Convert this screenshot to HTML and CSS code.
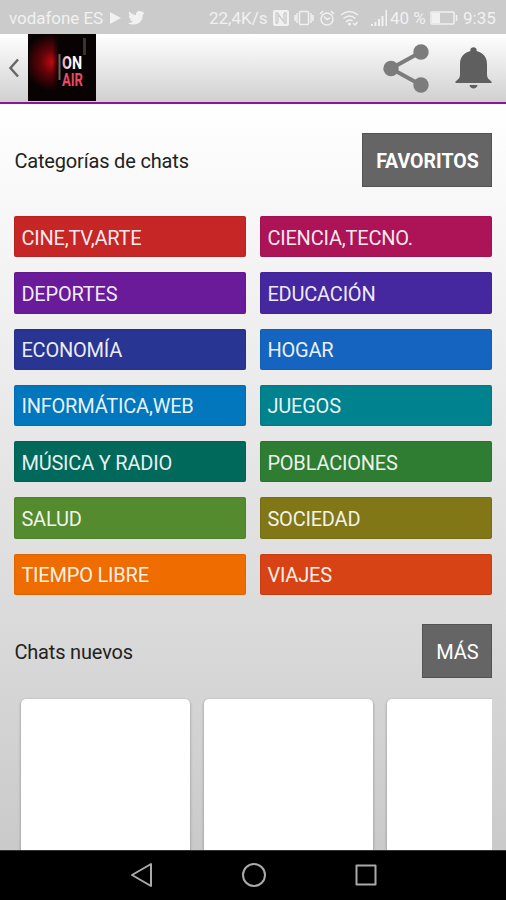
FILE: index.html
```html
<!DOCTYPE html>
<html lang="es">
<head>
<meta charset="utf-8">
<meta name="viewport" content="width=device-width, initial-scale=1">
<title>Chats</title>
<link rel="stylesheet" href="styles.css">
</head>
<body>
<div class="phone">
  <div class="status">
    <span class="carrier">vodafone ES</span>
    <svg class="play" width="11" height="12" viewBox="0 0 11 12"><path d="M0 0L11 6L0 12Z"/></svg>
    <svg class="bird" width="17" height="14" viewBox="0 0 17 14"><path d="M16.5 2L14.7 4C15 9.5 11 13.5 5.6 13.5C3.500 13.500 1.500 13 0 12C2 12.100 3.600 11.500 5 10.500C3.300 10.300 2.300 9.400 1.900 8.100H3.300C1.700 7.500 .8 6.200 .8 4.600L2.200 5C.8 3.700.500 2.200 1.300.600C3.100 2.800 5.300 4 8 4.200C7.500 1.800 9.200 0 11.400 0C12.400 0 13.200.400 13.900 1.100L16 .400L14.800 2Z"/></svg>
    <span class="speed">22,4K/s</span>
    <svg class="nfc" width="16" height="16" viewBox="0 0 16 16"><rect width="16" height="16" rx="2"/><path class="cut" d="M5 3H3V13H5M5 3V12.500M5 4L11 12V3.500M11 3H13V13H11"/></svg>
    <svg class="vibrate line" width="20" height="16" viewBox="0 0 20 16"><rect x="5.500" y="1.500" width="9" height="13" rx="1"/><path d="M3 3V7L2 8L3 9V13M1 5V11M17 3V7L18 8L17 9V13M19 5V11"/></svg>
    <svg class="alarm line" width="16" height="16" viewBox="0 0 16 16"><circle cx="8" cy="9" r="6"/><path d="M1 4L4 1M15 4L12 1M5 6.500L8 9.500L11 8"/></svg>
    <svg class="wifi line" width="19" height="16" viewBox="0 0 19 16"><path d="M1 5Q9.500 -2 18 5M3.500 8.500Q9.500 3.500 15.500 8.500M6 12Q9.500 8.500 12.500 11"/><circle class="dot" cx="9.500" cy="14" r="1.600"/><path d="M13 13L15 15L17.500 12"/></svg>
    <svg class="signal" width="17" height="16" viewBox="0 0 17 16"><path d="M0 14H2V16H0ZM3.500 12H5.500V16H3.500ZM7 9H9V16H7ZM10.500 6H12.500V16H10.500ZM14.500 0H16V16H14.500Z"/></svg>
    <span class="percent">40 %</span>
    <svg class="battery line" width="28" height="14" viewBox="0 0 28 14"><rect x="1" y="1" width="23" height="12" rx="1"/><path class="dot" d="M2 2H10V12H2Z"/><path d="M26.500 4V10"/></svg>
    <span class="time">9:35</span>
  </div>

  <header class="bar">
    <svg class="back" width="12" height="20" viewBox="0 0 12 20"><path d="M10 1.500L2.500 10L10 18.500"/></svg>
    <svg class="logo" width="68" height="67" viewBox="0 0 68 67">
      <defs>
        <radialGradient id="glow" cx="25" cy="28" r="29" gradientUnits="userSpaceOnUse"><stop offset="0" stop-color="#c80812"/><stop offset=".4" stop-color="#650408"/><stop offset="1" stop-color="#080203"/></radialGradient>
        <linearGradient id="fade" x1="0" x2="1"><stop offset="0" stop-color="#080203" stop-opacity="0"/><stop offset="1" stop-color="#080203"/></linearGradient>
        <linearGradient id="neon" x1="0" x2="1"><stop offset="0" stop-color="#f0a0ae"/><stop offset=".5" stop-color="#fff"/></linearGradient>
      </defs>
      <rect width="68" height="67" fill="#080203"/>
      <rect x="1" y="1" width="30" height="65" fill="url(#glow)"/>
      <rect x="24" y="1" width="7" height="65" fill="url(#fade)"/>
      <path d="M31.500 20V46" stroke="#75605b" stroke-width="2"/>
      <path d="M56.500 4V21" stroke="#343632" stroke-width="3"/>
      <text x="34" y="35" textLength="20" lengthAdjust="spacingAndGlyphs" fill="url(#neon)">ON</text>
      <text x="34" y="52" textLength="21" lengthAdjust="spacingAndGlyphs" fill="#ed4763">AIR</text>
    </svg>
    <svg class="share" width="46" height="49" viewBox="0 0 46 49"><path d="M38 8L8 24.500L38 41"/><circle cx="8" cy="24.500" r="7.700"/><circle cx="38" cy="8" r="7.700"/><circle cx="38" cy="41" r="7.700"/></svg>
    <svg class="bell" width="37" height="43" viewBox="0 0 37 43"><path d="M15.500 5C14 0 23 0 21.500 5C28 6.500 32 11 32 18V29C32 32 34 33.500 36.500 35.500V37H.5V35.500C3 33.500 5 32 5 29V18C5 11 9 6.500 15.500 5ZM14.500 39H22.500C22 43.500 15 43.500 14.500 39Z"/></svg>
  </header>

  <main class="content">
    <div class="heading">
      <h2>Categorías de chats</h2>
      <button class="button strong">FAVORITOS</button>
    </div>
    <div class="categories">
      <a class="red">CINE,TV,ARTE</a><a class="pink">CIENCIA,TECNO.</a>
      <a class="purple">DEPORTES</a><a class="violet">EDUCACIÓN</a>
      <a class="indigo">ECONOMÍA</a><a class="blue">HOGAR</a>
      <a class="sky">INFORMÁTICA,WEB</a><a class="cyan">JUEGOS</a>
      <a class="teal">MÚSICA Y RADIO</a><a class="green">POBLACIONES</a>
      <a class="lime">SALUD</a><a class="olive">SOCIEDAD</a>
      <a class="orange">TIEMPO LIBRE</a><a class="vermilion">VIAJES</a>
    </div>
    <div class="heading recent">
      <h2>Chats nuevos</h2>
      <button class="button more">MÁS</button>
    </div>
    <div class="cards"><div class="card"></div><div class="card"></div><div class="card"></div></div>
  </main>

  <nav class="nav">
    <svg width="24" height="26" viewBox="0 0 24 26"><path d="M21 2V24L2 13Z"/></svg>
    <svg width="26" height="26" viewBox="0 0 26 26"><circle cx="13" cy="13" r="11"/></svg>
    <svg width="24" height="26" viewBox="0 0 24 26"><rect x="2.500" y="3.500" width="19" height="19"/></svg>
  </nav>
</div>
</body>
</html>
```
FILE: styles.css
```css
* { box-sizing: border-box; }
body { margin: 0; font-family: Roboto, "Liberation Sans", sans-serif; }
svg { display: block; flex: none; }
.phone { width: 506px; height: 900px; display: flex; flex-direction: column; overflow: hidden; }

.status { height: 34px; flex: none; display: flex; align-items: center; padding: 2px 0 0 9px; background: #cbcbcb; color: #f1f1f1; font-size: 17px; line-height: 20px; white-space: nowrap; }
.status svg { fill: #f1f1f1; }
.status .line { fill: none; stroke: #f1f1f1; stroke-width: 1.5; }
.status .dot { fill: #f1f1f1; stroke: none; }
.status .cut { fill: none; stroke: #cbcbcb; stroke-width: 1.3; }
.carrier { width: 101px; letter-spacing: -.05px; }
.bird { margin-left: 7px; }
.speed { width: 64px; margin-left: 64px; }
.vibrate { margin-left: 5px; }
.alarm { margin-left: 5px; }
.wifi { margin-left: 5px; }
.signal { margin-left: 12px; }
.percent { width: 40px; margin-left: 2px; }
.time { margin-left: 5px; }

.bar { height: 70px; flex: none; display: flex; align-items: flex-start; border-bottom: 2px solid #8d1592; background: linear-gradient(#fff, #d0d0d0); }
.back { margin: 24px 0 0 8px; fill: none; stroke: #686868; stroke-width: 2.5; }
.logo { margin-left: 8px; }
.logo text { font-size: 17.5px; font-weight: 700; }
.share { margin: 10px 0 0 287px; fill: #7c7c7c; }
.share path { fill: none; stroke: #7c7c7c; stroke-width: 4; }
.bell { margin: 12px 0 0 25.5px; fill: #5f5f5f; }

.content { height: 746px; flex: none; padding: 29px 13.6px 0 14.4px; background: linear-gradient(#fff, #cacaca); overflow: hidden; }
.heading { height: 54px; display: flex; align-items: center; justify-content: space-between; }
.heading h2 { margin: 0; padding-top: 2px; font-size: 20px; line-height: 26px; font-weight: 400; color: #222; letter-spacing: -.17px; }
.button { height: 54px; width: 130px; padding: 3px 0 0; border: 1px solid #535353; background: #656565; color: #fff; font: 400 20px Roboto, sans-serif; }
.button.strong { font-weight: 700; font-size: 19.5px; }
.button.more { width: 70px; padding-top: 2px; }
.categories { margin-top: 29px; display: grid; grid-template-columns: 232px 232px; grid-auto-rows: 41.25px; gap: 15px 14px; }
.categories a { padding: 1.5px 7px 0; border-radius: 2px; box-shadow: inset 0 0 1px 1px rgba(0, 0, 0, .08); color: rgba(255, 255, 255, .92); font-size: 20px; letter-spacing: -.2px; line-height: 40px; white-space: nowrap; }
.red { background: #c62626; }
.pink { background: #ad1457; }
.purple { background: #6a1b9a; }
.violet { background: #4527a0; }
.indigo { background: #283593; }
.blue { background: #1565c0; }
.sky { background: #0277bd; }
.cyan { background: #00838f; }
.teal { background: #00695c; }
.green { background: #2e7d32; }
.lime { background: #558b2f; }
.olive { background: #827717; }
.orange { background: #ef6c00; }
.vermilion { background: #d84315; }
.recent { margin-top: 29px; }
.cards { display: flex; gap: 14px; height: 155px; margin-top: 17px; padding: 4px 0 0 7px; overflow: hidden; }
.card { flex: 0 0 169px; height: 180px; border-radius: 5px; background: #fff; box-shadow: 0 1px 3px rgba(0, 0, 0, .35); }

.nav { height: 50px; flex: none; display: flex; align-items: center; justify-content: center; gap: 87px; padding: 0 0 1px 1px; background: #000; border-top: 1px solid #333; }
.nav svg { fill: none; stroke: #aaa; stroke-width: 2; stroke-linejoin: round; }
```
